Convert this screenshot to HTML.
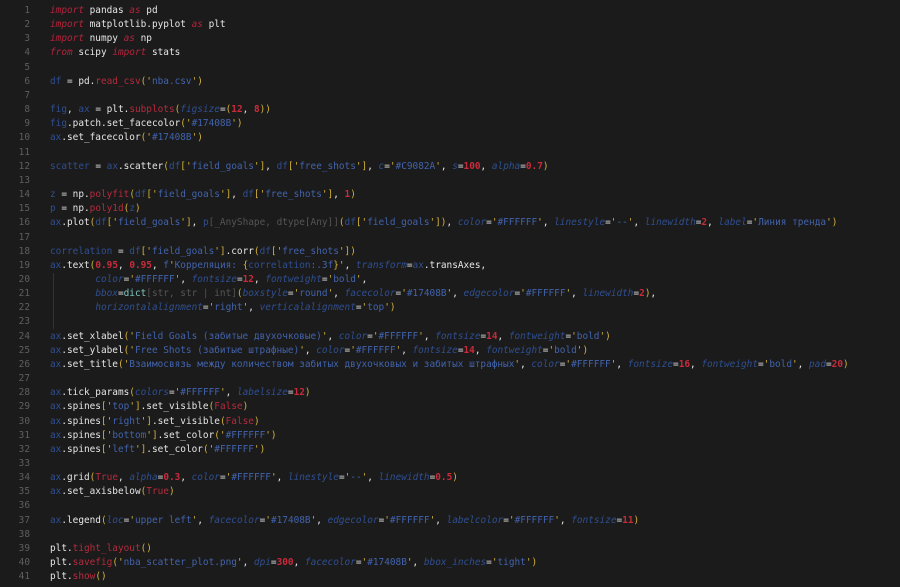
<!DOCTYPE html>
<html><head><meta charset="utf-8"><style>
html,body{margin:0;padding:0;background:#1b1b1b;width:900px;height:587px;overflow:hidden}
.wrap{position:absolute;top:4px;left:0;font-family:"DejaVu Sans Mono","Liberation Mono",monospace;font-size:9.41px;line-height:14.15px;color:#e6e6e6;white-space:pre}
.ln{position:absolute;left:0;width:30px;text-align:right;color:#5e5e5e}
.code{position:absolute;left:50px}
k{color:#b3243c;font-style:italic}
v{color:#2f4f91}
f{color:#b52b3d}
s{color:#4263ad;text-decoration:none}
y{color:#d4b33a}
n{color:#c92b3b;font-weight:bold}
a{color:#2f4f91;font-style:italic}
g{color:#555}
c{color:#7ec8c0}
.guide{position:absolute;left:53px;top:273px;width:1px;height:56px;background:#333}
</style></head><body>
<div class="guide"></div>
<div class="wrap"><div class="ln">1
2
3
4
5
6
7
8
9
10
11
12
13
14
15
16
17
18
19
20
21
22
23
24
25
26
27
28
29
30
31
32
33
34
35
36
37
38
39
40
41</div><div class="code"><k>import</k> pandas <k>as</k> pd
<k>import</k> matplotlib.pyplot <k>as</k> plt
<k>import</k> numpy <k>as</k> np
<k>from</k> scipy <k>import</k> stats

<v>df</v> = pd.<f>read_csv</f><y>('</y><s>nba.csv</s><y>')</y>

<v>fig</v>, <v>ax</v> = plt.<f>subplots</f><y>(</y><a>figsize</a>=<y>(</y><n>12</n>, <n>8</n><y>))</y>
<v>fig</v>.patch.set_facecolor<y>('</y><s>#17408B</s><y>')</y>
<v>ax</v>.set_facecolor<y>('</y><s>#17408B</s><y>')</y>

<v>scatter</v> = <v>ax</v>.scatter<y>(</y><v>df</v><y>['</y><s>field_goals</s><y>']</y>, <v>df</v><y>['</y><s>free_shots</s><y>']</y>, <a>c</a>=<y>'</y><s>#C9082A</s><y>'</y>, <a>s</a>=<n>100</n>, <a>alpha</a>=<n>0.7</n><y>)</y>

<v>z</v> = np.<f>polyfit</f><y>(</y><v>df</v><y>['</y><s>field_goals</s><y>']</y>, <v>df</v><y>['</y><s>free_shots</s><y>']</y>, <n>1</n><y>)</y>
<v>p</v> = np.<f>poly1d</f><y>(</y><v>z</v><y>)</y>
<v>ax</v>.plot<y>(</y><v>df</v><y>['</y><s>field_goals</s><y>']</y>, <v>p</v><g>[_AnyShape, dtype[Any]]</g><y>(</y><v>df</v><y>['</y><s>field_goals</s><y>'])</y>, <a>color</a>=<y>'</y><s>#FFFFFF</s><y>'</y>, <a>linestyle</a>=<y>'</y><s>--</s><y>'</y>, <a>linewidth</a>=<n>2</n>, <a>label</a>=<y>'</y><s>Линия тренда</s><y>')</y>

<v>correlation</v> = <v>df</v><y>['</y><s>field_goals</s><y>']</y>.corr<y>(</y><v>df</v><y>['</y><s>free_shots</s><y>'])</y>
<v>ax</v>.text<y>(</y><n>0.95</n>, <n>0.95</n>, <s>f</s><y>'</y><s>Корреляция: </s><y>{</y><v>correlation</v><s>:.3f</s><y>}</y><y>'</y>, <a>transform</a>=<v>ax</v>.transAxes,
        <a>color</a>=<y>'</y><s>#FFFFFF</s><y>'</y>, <a>fontsize</a>=<n>12</n>, <a>fontweight</a>=<y>'</y><s>bold</s><y>'</y>,
        <a>bbox</a>=<c>dict</c><g>[str, str | int]</g><y>(</y><a>boxstyle</a>=<y>'</y><s>round</s><y>'</y>, <a>facecolor</a>=<y>'</y><s>#17408B</s><y>'</y>, <a>edgecolor</a>=<y>'</y><s>#FFFFFF</s><y>'</y>, <a>linewidth</a>=<n>2</n><y>)</y>,
        <a>horizontalalignment</a>=<y>'</y><s>right</s><y>'</y>, <a>verticalalignment</a>=<y>'</y><s>top</s><y>')</y>

<v>ax</v>.set_xlabel<y>('</y><s>Field Goals (забитые двухочковые)</s><y>'</y>, <a>color</a>=<y>'</y><s>#FFFFFF</s><y>'</y>, <a>fontsize</a>=<n>14</n>, <a>fontweight</a>=<y>'</y><s>bold</s><y>')</y>
<v>ax</v>.set_ylabel<y>('</y><s>Free Shots (забитые штрафные)</s><y>'</y>, <a>color</a>=<y>'</y><s>#FFFFFF</s><y>'</y>, <a>fontsize</a>=<n>14</n>, <a>fontweight</a>=<y>'</y><s>bold</s><y>')</y>
<v>ax</v>.set_title<y>('</y><s>Взаимосвязь между количеством забитых двухочковых и забитых штрафных</s><y>'</y>, <a>color</a>=<y>'</y><s>#FFFFFF</s><y>'</y>, <a>fontsize</a>=<n>16</n>, <a>fontweight</a>=<y>'</y><s>bold</s><y>'</y>, <a>pad</a>=<n>20</n><y>)</y>

<v>ax</v>.tick_params<y>(</y><a>colors</a>=<y>'</y><s>#FFFFFF</s><y>'</y>, <a>labelsize</a>=<n>12</n><y>)</y>
<v>ax</v>.spines<y>['</y><s>top</s><y>']</y>.set_visible<y>(</y><f>False</f><y>)</y>
<v>ax</v>.spines<y>['</y><s>right</s><y>']</y>.set_visible<y>(</y><f>False</f><y>)</y>
<v>ax</v>.spines<y>['</y><s>bottom</s><y>']</y>.set_color<y>('</y><s>#FFFFFF</s><y>')</y>
<v>ax</v>.spines<y>['</y><s>left</s><y>']</y>.set_color<y>('</y><s>#FFFFFF</s><y>')</y>

<v>ax</v>.grid<y>(</y><f>True</f>, <a>alpha</a>=<n>0.3</n>, <a>color</a>=<y>'</y><s>#FFFFFF</s><y>'</y>, <a>linestyle</a>=<y>'</y><s>--</s><y>'</y>, <a>linewidth</a>=<n>0.5</n><y>)</y>
<v>ax</v>.set_axisbelow<y>(</y><f>True</f><y>)</y>

<v>ax</v>.legend<y>(</y><a>loc</a>=<y>'</y><s>upper left</s><y>'</y>, <a>facecolor</a>=<y>'</y><s>#17408B</s><y>'</y>, <a>edgecolor</a>=<y>'</y><s>#FFFFFF</s><y>'</y>, <a>labelcolor</a>=<y>'</y><s>#FFFFFF</s><y>'</y>, <a>fontsize</a>=<n>11</n><y>)</y>

plt.<f>tight_layout</f><y>()</y>
plt.<f>savefig</f><y>('</y><s>nba_scatter_plot.png</s><y>'</y>, <a>dpi</a>=<n>300</n>, <a>facecolor</a>=<y>'</y><s>#17408B</s><y>'</y>, <a>bbox_inches</a>=<y>'</y><s>tight</s><y>')</y>
plt.<f>show</f><y>()</y></div></div>
</body></html>
